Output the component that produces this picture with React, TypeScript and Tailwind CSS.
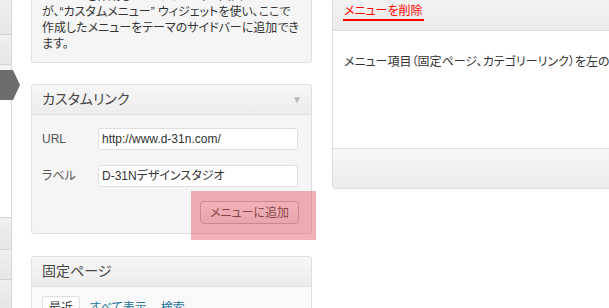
import React from 'react';

const font = "font-['Liberation_Sans','Noto_Sans_CJK_JP',sans-serif]";

const Sidebar: React.FC = () => (
  <div className="relative w-[12px] shrink-0 flex flex-col border-r border-[#d9d9d9]">
    <div className="h-[35px] bg-gradient-to-b from-[#f0f0f0] to-[#e6e6e6] border-b border-[#d4d4d4]" />
    <div className="h-[30px] bg-gradient-to-b from-[#f0f0f0] to-[#e6e6e6] border-b border-[#d4d4d4]" />
    <div className="h-[5px] bg-[#f3f3f3]" />
    <div className="h-[30px] bg-[#6d6d6d]" />
    <div className="h-[118px] bg-white border-b border-[#d4d4d4]" />
    <div className="h-[32px] bg-gradient-to-b from-[#f0f0f0] to-[#e6e6e6] border-b border-[#d4d4d4]" />
    <div className="h-[30px] bg-gradient-to-b from-[#f0f0f0] to-[#e6e6e6] border-b border-[#d4d4d4]" />
    <div className="flex-1 bg-gradient-to-b from-[#f0f0f0] to-[#e6e6e6]" />
    {/* current item pointer */}
    <svg className="absolute left-0 top-[70px]" width="20" height="30" viewBox="0 0 20 30">
      <polygon points="0,0 13,0 20,15 13,30 0,30" fill="#6d6d6d" />
    </svg>
  </div>
);

const CardHeader: React.FC<{ title: string; arrow?: boolean }> = ({ title, arrow }) => (
  <div className="h-[30px] flex items-center justify-between pl-[10px] pr-[9px] bg-gradient-to-b from-[#f7f7f7] to-[#ececec] border-b border-[#dfdfdf] rounded-t-[3px]">
    <span className="text-[14px] text-[#464646] [font-feature-settings:'palt']">{title}</span>
    {arrow && <span className="text-[10px] text-[#bbbbbb]">▼</span>}
  </div>
);

const App: React.FC = () => {
  return (
    <div className={`w-[609px] h-[308px] overflow-hidden bg-white flex ${font}`}>
      <Sidebar />

      {/* left column */}
      <div className="ml-[19px] w-[281px] shrink-0 flex flex-col">
        <div className="-mt-[20px] pt-[7px] pb-[10px] px-[10px] bg-[#f5f5f5] border border-[#dfdfdf] rounded-[3px] text-[12px] leading-[16px] text-[#333] [font-feature-settings:'palt'] whitespace-nowrap">
          <div>メニューを作成したら、ウィジェット画面で</div>
          <div>が、“カスタムメニュー” ウィジェットを使い、ここで</div>
          <div>作成したメニューをテーマのサイドバーに追加でき</div>
          <div>ます。</div>
        </div>

        <div className="mt-[21px] border border-[#dfdfdf] rounded-[3px] bg-[#f5f5f5]">
          <CardHeader title="カスタムリンク" arrow />
          <div className="relative pt-[13px] pb-[9px] pl-[10px] pr-[12px] flex flex-col">
            <div className="flex items-center">
              <span className="w-[56px] text-[12px] text-[#555]">URL</span>
              <div className="w-[200px] h-[22px] flex items-center pl-[3px] bg-white border border-[#dfdfdf] rounded-[3px] text-[12px] text-[#333]">
                http://www.d-31n.com/
              </div>
            </div>
            <div className="mt-[15px] flex items-center">
              <span className="w-[56px] text-[12px] text-[#555] [font-feature-settings:'palt']">ラベル</span>
              <div className="w-[200px] h-[22px] flex items-center pl-[3px] bg-white border border-[#dfdfdf] rounded-[3px] text-[12px] text-[#333] [font-feature-settings:'palt']">
                D-31Nデザインスタジオ
              </div>
            </div>
            <div className="mt-[14px] flex justify-end">
              <div className="w-[99px] h-[23px] flex items-center justify-center bg-gradient-to-b from-white to-[#ededed] border border-[#bbbbbb] rounded-[4px] text-[12px] text-[#464646] [font-feature-settings:'palt']">
                メニューに追加
              </div>
            </div>
            {/* highlight overlay */}
            <div className="absolute left-[159px] top-[76px] w-[125px] h-[49px] bg-[rgba(225,70,80,0.42)]" />
          </div>
        </div>

        <div className="mt-[22px] border border-[#dfdfdf] rounded-[3px] bg-[#f9f9f9]">
          <CardHeader title="固定ページ" />
          <div className="pt-[9px] px-[10px] flex items-end gap-[10px] text-[12px] [font-feature-settings:'palt']">
            <span className="px-[6px] pt-[2px] bg-white border border-b-0 border-[#dfdfdf] rounded-t-[3px] text-[#333]">最近</span>
            <span className="text-[#21759b]">すべて表示</span>
            <span className="ml-[4px] text-[#21759b]">検索</span>
          </div>
        </div>
      </div>

      {/* right panel */}
      <div className="ml-[20px] flex-1 flex flex-col self-start border-l border-[#dfdfdf] rounded-bl-[3px]">
        <div className="h-[31px] pl-[10px] flex items-start pt-[3px] bg-gradient-to-b from-[#f2f2f2] to-[#ebebeb] border-b border-[#dfdfdf]">
          <span className="inline-block px-[1px] leading-[16px] border-b-2 border-[#ff0000] text-[12px] text-[#ff0000] [font-feature-settings:'palt']">メニューを削除</span>
        </div>
        <div className="h-[117px] bg-white pl-[11px] pt-[22px] text-[12px] text-[#333] whitespace-nowrap [font-feature-settings:'palt']">
          メニュー項目（固定ページ、カテゴリーリンク）を左のボックスから
        </div>
        <div className="h-[41px] bg-gradient-to-b from-[#f7f7f7] to-[#ececec] border-t border-b border-[#dfdfdf] rounded-bl-[3px]" />
      </div>
    </div>
  );
};

export default App;
